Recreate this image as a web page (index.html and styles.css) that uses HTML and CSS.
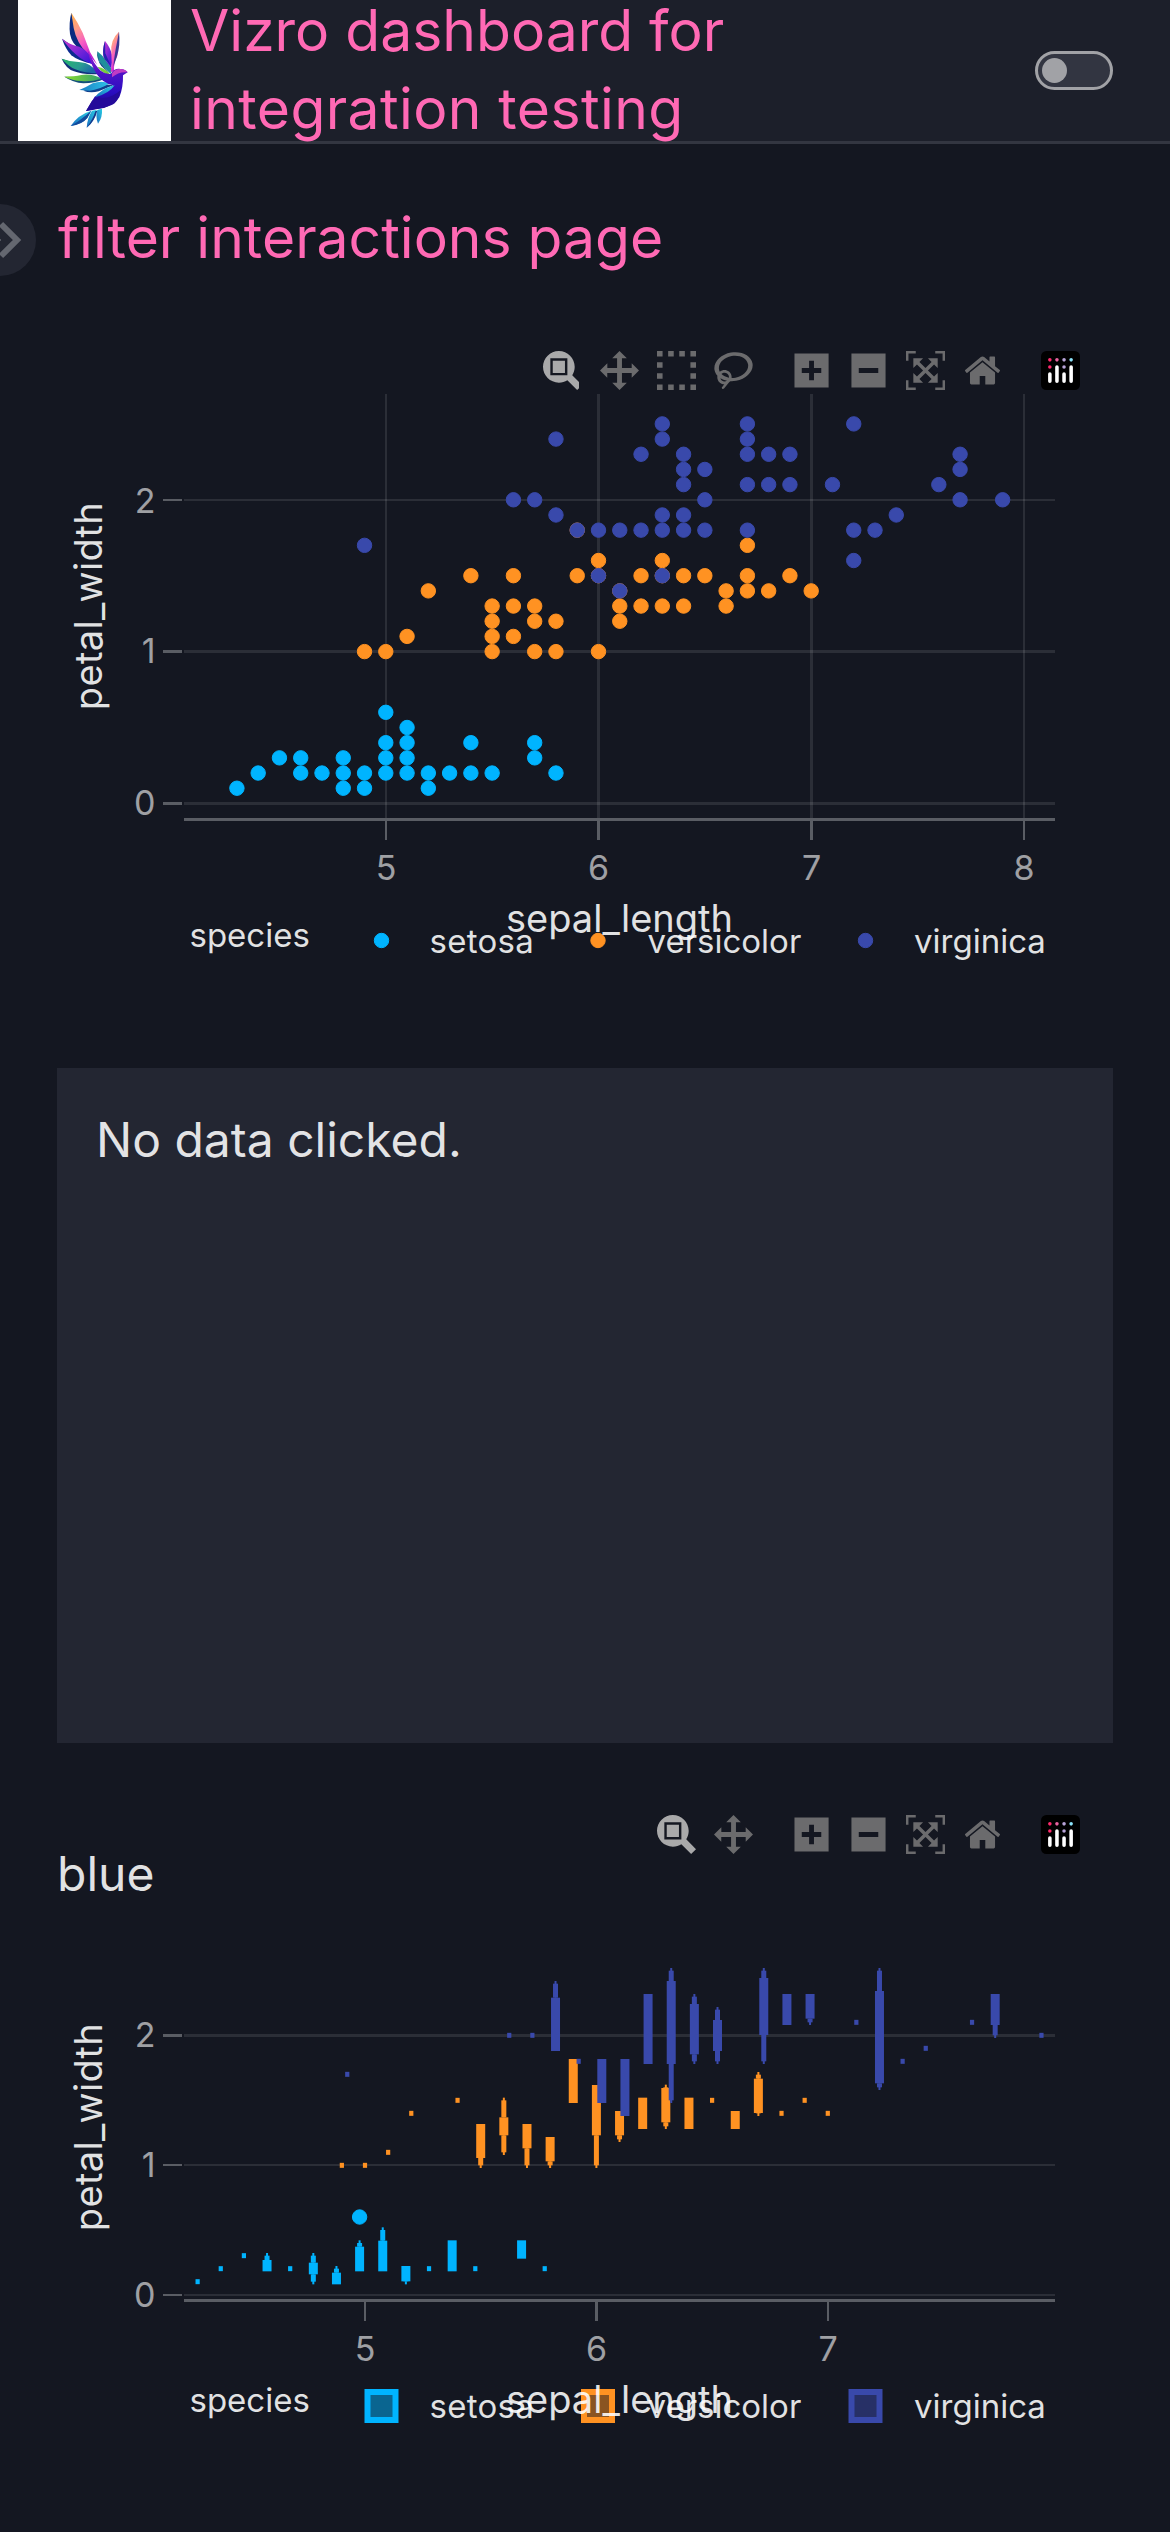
FILE: index.html
```html
<!DOCTYPE html>
<html lang="en">
<head>
<meta charset="utf-8">
<title>Vizro dashboard</title>
<link rel="stylesheet" href="styles.css">
</head>
<body>
<svg class="defs" width="0" height="0" aria-hidden="true">
  <symbol id="i-zoom" viewBox="0 0 1000 1000"><path transform="matrix(1 0 0 -1 0 850)" d="m1000-25l-250 251c40 63 63 138 63 218 0 224-182 406-407 406-224 0-406-182-406-406s183-406 407-406c80 0 155 22 218 62l250-250 125 125z m-812 250l0 438 437 0 0-438-437 0z m62 375l313 0 0-312-313 0 0 312z"/></symbol>
  <symbol id="i-pan" viewBox="0 0 1000 1000"><path transform="matrix(1 0 0 -1 0 850)" d="m1000 350l-187 188 0-125-250 0 0 250 125 0-188 187-187-187 125 0 0-250-250 0 0 125-188-188 186-187 0 125 252 0 0-250-125 0 187-188 188 188-125 0 0 250 250 0 0-126 187 188z"/></symbol>
  <symbol id="i-select" viewBox="0 0 1000 1000"><path transform="matrix(1 0 0 -1 0 850)" d="m0 850l0-143 143 0 0 143-143 0z m286 0l0-143 143 0 0 143-143 0z m285 0l0-143 143 0 0 143-143 0z m286 0l0-143 143 0 0 143-143 0z m-857-286l0-143 143 0 0 143-143 0z m857 0l0-143 143 0 0 143-143 0z m-857-285l0-143 143 0 0 143-143 0z m857 0l0-143 143 0 0 143-143 0z m-857-286l0-143 143 0 0 143-143 0z m286 0l0-143 143 0 0 143-143 0z m285 0l0-143 143 0 0 143-143 0z m286 0l0-143 143 0 0 143-143 0z"/></symbol>
  <symbol id="i-lasso" viewBox="0 0 1031 1000"><path transform="matrix(1 0 0 -1 0 850)" d="m1018 538c-36 207-290 336-568 286-277-48-473-256-436-463 10-57 36-108 76-151-13-66 11-137 68-183 34-28 75-41 114-42l-55-70 0 0c-2-1-3-2-4-3-10-14-8-34 5-45 14-11 34-8 45 4 1 1 2 3 2 5l0 0 113 140c16 11 31 24 45 40 4 3 6 7 8 11 48-3 100 0 151 9 278 48 473 255 436 462z m-624-379c-80 14-149 48-197 96 42 42 109 47 156 9 33-26 47-66 41-105z m-187-74c-19 16-33 37-39 60 50-32 109-55 174-68-42-25-95-24-135 8z m360 75c-34-7-69-9-102-8 8 62-16 128-68 170-73 59-175 54-244-5-9 20-16 40-20 61-28 159 121 317 333 354s407-60 434-217c28-159-121-318-333-355z"/></symbol>
  <symbol id="i-plus" viewBox="0 0 875 1000"><path transform="matrix(1 0 0 -1 0 850)" d="m1 787l0-875 875 0 0 875-875 0z m687-500l-187 0 0-187-125 0 0 187-188 0 0 125 188 0 0 187 125 0 0-187 187 0 0-125z"/></symbol>
  <symbol id="i-minus" viewBox="0 0 875 1000"><path transform="matrix(1 0 0 -1 0 850)" d="m0 788l0-876 875 0 0 876-875 0z m688-500l-500 0 0 125 500 0 0-125z"/></symbol>
  <symbol id="i-auto" viewBox="0 0 1000 1000"><path transform="matrix(1 0 0 -1 0 850)" d="m250 850l-187 0-63 0 0-62 0-188 63 0 0 188 187 0 0 62z m688 0l-188 0 0-62 188 0 0-188 62 0 0 188 0 62-62 0z m-875-938l0 188-63 0 0-188 0-62 63 0 187 0 0 62-187 0z m875 188l0-188-188 0 0-62 188 0 62 0 0 62 0 188-62 0z m-125 188l-1 0-93-94-156 156 156 156 92-93 2 0 0 250-250 0 0-2 93-92-156-156-156 156 94 92 0 2-250 0 0-250 0 0 93 93 157-156-157-156-93 94 0 0 0-250 250 0 0 0-94 93 156 157 156-157-93-93 0 0 250 0 0 250z"/></symbol>
  <symbol id="i-home" viewBox="0 0 928.6 1000"><path transform="matrix(1 0 0 -1 0 850)" d="m786 296v-267q0-15-11-26t-25-10h-214v214h-143v-214h-214q-15 0-25 10t-11 26v267q0 1 0 2t0 2l321 264 321-264q1-1 1-4z m124 39l-34-41q-5-5-12-6h-2q-7 0-12 3l-386 322-386-322q-7-4-13-4-7 2-12 7l-35 41q-4 5-3 13t6 12l401 334q18 15 42 15t43-15l136-114v109q0 8 5 13t13 5h107q8 0 13-5t5-13v-227l122-102q5-5 6-12t-4-13z"/></symbol>
  <symbol id="i-plotly" viewBox="0 0 132 132">
    <rect width="132" height="132" rx="18" fill="#000"/>
    <circle cx="102" cy="30" r="6" fill="#8ce4fb"/><circle cx="78" cy="30" r="6" fill="#b8a4d8"/><circle cx="78" cy="54" r="6" fill="#b8a4d8"/><circle cx="54" cy="30" r="6" fill="#e763a0"/><circle cx="30" cy="30" r="6" fill="#ff2a6d"/><circle cx="30" cy="54" r="6" fill="#ff2a6d"/>
    <path fill="#fff" d="M30,72a6,6,0,0,0-6,6v24a6,6,0,0,0,12,0V78A6,6,0,0,0,30,72ZM78,72a6,6,0,0,0-6,6v24a6,6,0,0,0,12,0V78A6,6,0,0,0,78,72ZM54,48a6,6,0,0,0-6,6v48a6,6,0,0,0,12,0V54A6,6,0,0,0,54,48ZM102,48a6,6,0,0,0-6,6v48a6,6,0,0,0,12,0V54A6,6,0,0,0,102,48Z"/>
  </symbol>
</svg>

<header class="header">
  <svg class="logo" viewBox="54 0 459 423" role="img" aria-label="Logo">
    <defs>
      <linearGradient id="g1" x1="0" y1="0" x2="0.4" y2="1"><stop offset="0" stop-color="#ffb347"/><stop offset=".35" stop-color="#ff9a8a"/><stop offset=".65" stop-color="#f65bc4"/><stop offset="1" stop-color="#c21fd0"/></linearGradient>
      <linearGradient id="g2" x1="0" y1="0" x2="1" y2="1"><stop offset="0" stop-color="#d83ccb"/><stop offset=".5" stop-color="#7a25d8"/><stop offset="1" stop-color="#2a12d8"/></linearGradient>
      <linearGradient id="g3" x1="0" y1="0" x2="1" y2=".4"><stop offset="0" stop-color="#25b868"/><stop offset=".6" stop-color="#2a9c92"/><stop offset="1" stop-color="#1a66a8"/></linearGradient>
      <linearGradient id="g4" x1="0" y1="0" x2="1" y2="0"><stop offset="0" stop-color="#8fe02c"/><stop offset="1" stop-color="#2f9e70"/></linearGradient>
      <linearGradient id="g5" x1="0" y1="0" x2="1" y2="0"><stop offset="0" stop-color="#1a7fc4"/><stop offset="1" stop-color="#2fc4e8"/></linearGradient>
      <linearGradient id="g6" x1="0" y1="0" x2="0" y2="1"><stop offset="0" stop-color="#9a1fd0"/><stop offset=".35" stop-color="#5214c8"/><stop offset=".7" stop-color="#2a0cc0"/><stop offset="1" stop-color="#1b0e78"/></linearGradient>
      <linearGradient id="g7" x1="1" y1="0" x2="0" y2="1"><stop offset="0" stop-color="#2ad0e4"/><stop offset="1" stop-color="#1a6cc0"/></linearGradient>
    </defs>
    <rect x="54" width="459" height="423" fill="#fff"/>
    <path fill="#0b2a80" d="M214 38Q206 70 210 102Q216 134 242 148L272 180L262 148Q236 120 225 82Z"/>
    <path fill="url(#g1)" d="M214 38Q234 68 248 98L270 156L292 194L262 160Q230 130 221 84Z"/>
    <path fill="#0b2a90" d="M186 116Q196 146 214 166Q236 184 280 192L264 170Z"/>
    <path fill="url(#g2)" d="M186 116Q208 134 238 140Q262 150 278 180L284 194Q252 186 226 162Q208 146 186 116Z"/>
    <path fill="#12307c" d="M185 176Q198 206 222 214Q254 226 298 222L270 206Z"/>
    <path fill="url(#g3)" d="M185 176Q212 186 242 187Q270 188 296 220Q252 220 226 208Q206 200 185 176Z"/>
    <path fill="#14507c" d="M193 230Q220 248 250 250Q284 250 312 238L290 232Z"/>
    <path fill="url(#g4)" d="M193 230Q224 230 244 225Q276 220 304 236Q272 246 244 243Q218 242 193 230Z"/>
    <path fill="#11408c" d="M250 272Q270 280 296 274L340 256L310 252Z"/>
    <path fill="url(#g5)" d="M238 270Q262 260 278 250Q304 240 330 250Q296 270 270 272Z"/>
    <path fill="#1e8f9c" d="M292 154Q290 176 302 192L332 222L336 210Q318 174 292 154Z"/>
    <path fill="#0d4a86" d="M292 154L297 184L330 222L304 198Q290 180 292 154Z"/>
    <path fill="#77cf3c" d="M292 200Q318 204 330 224L318 222Q300 212 292 200Z"/>
    <path fill="url(#g2)" d="M315 123Q306 150 310 170L334 206L338 170Q330 140 315 123Z"/>
    <path fill="#2323b0" d="M315 123L316 160L332 196L314 178Q304 156 315 123Z"/>
    <path fill="url(#g1)" d="M357 95Q330 120 334 158Q337 190 332 216L342 214Q340 190 352 168Q358 130 357 95Z"/>
    <path fill="#3a3690" d="M357 95Q362 136 350 172L340 200Q344 160 350 132Z"/>
    <path fill="url(#g6)" d="M262 148Q280 192 302 212Q318 224 332 222Q342 204 362 207Q376 208 383 217L369 226Q370 262 358 292Q344 312 312 324Q288 326 258 333L284 290L340 256Q308 250 290 222Q272 196 262 148Z"/>
    <path fill="#c03cc4" d="M336 220Q344 206 362 207Q376 208 383 217Q356 214 336 232Z"/>
    <path fill="#240a9a" d="M294 292Q330 300 362 270Q358 296 344 310Q324 324 258 333L276 302Z"/>
    <path fill="url(#g7)" d="M286 292Q300 268 344 256Q328 280 286 292Z"/>
    <path fill="url(#g7)" d="M274 332Q234 344 212 378Q246 372 262 354Z"/>
    <path fill="#134a9c" d="M274 332L262 354Q246 374 212 378Q240 362 274 332Z"/>
    <path fill="url(#g7)" d="M276 332Q262 354 260 383Q284 366 290 330Z"/>
    <path fill="#16388c" d="M286 334Q280 356 260 383Q284 364 292 332Z"/>
    <path fill="url(#g7)" d="M292 330Q286 352 294 371Q308 352 306 326Z"/>
  </svg>
  <h1 class="title">Vizro dashboard for <span class="title-second">integration testing</span></h1>
  <span class="switch"><span class="knob"></span></span>
</header>

<main class="page">
  <div class="page-head">
    <svg class="collapse" viewBox="0 0 36 72"><circle cx="0" cy="36" r="36" fill="#232632"/><path d="M1 20L17 36L1 52" fill="none" stroke="#646770" stroke-width="6"/><circle cx="0" cy="36" r="1" fill="#646770"/></svg>
    <h2 class="page-title">filter interactions page</h2>
  </div>

  <section class="figure figure-scatter">
    <div class="modebar">
      <div class="group"><svg class="on"><use href="#i-zoom"/></svg><svg><use href="#i-pan"/></svg><svg><use href="#i-select"/></svg><svg><use href="#i-lasso"/></svg></div>
      <div class="group"><svg><use href="#i-plus"/></svg><svg><use href="#i-minus"/></svg><svg><use href="#i-auto"/></svg><svg><use href="#i-home"/></svg></div>
      <div class="group"><svg><use href="#i-plotly"/></svg></div>
    </div>
    <svg class="plot" viewBox="57 390 1056 630" width="1056" height="630">
      <g class="grid"><rect x="385" y="394" width="2" height="424"/><rect x="597" y="394" width="3" height="424"/><rect x="810" y="394" width="3" height="424"/><rect x="1023" y="394" width="2" height="424"/><rect x="184" y="499" width="871" height="2"/><rect x="184" y="650" width="871" height="3"/><rect x="184" y="802" width="871" height="3"/></g>
      <g class="axis"><rect x="184" y="818" width="871" height="3"/><rect x="385" y="821" width="2" height="19"/><rect x="597" y="821" width="3" height="19"/><rect x="810" y="821" width="3" height="19"/><rect x="1023" y="821" width="2" height="19"/><rect x="163" y="499" width="19" height="2"/><rect x="163" y="650" width="19" height="3"/><rect x="163" y="802" width="19" height="3"/></g>
      <g id="scatter"></g>
      <g class="tick end"><text x="155.5" y="512.5">2</text><text x="155.5" y="663">1</text><text x="155.5" y="815">0</text></g>
      <g class="tick mid"><text x="386" y="880">5</text><text x="598.5" y="880">6</text><text x="811.5" y="880">7</text><text x="1024" y="880">8</text></g>
      <g class="legend"><text x="189.5" y="946.5">species</text><text class="wide" x="429.5" y="953">setosa</text><text x="647.5" y="953">versicolor</text><text x="914" y="953">virginica</text></g>
      <circle class="setosa" cx="381.5" cy="940.5" r="7.2"/><circle class="versicolor" cx="598" cy="940.5" r="7.2"/><circle class="virginica" cx="865.5" cy="940.5" r="7.2"/>
      <text class="label" x="619.5" y="932">sepal_length</text>
      <text class="label wide" transform="translate(101.5 606) rotate(-90)">petal_width</text>
    </svg>
  </section>

  <section class="card"><p>No data clicked.</p></section>

  <section class="figure figure-box">
    <div class="modebar">
      <div class="group"><svg class="on"><use href="#i-zoom"/></svg><svg><use href="#i-pan"/></svg></div>
      <div class="group"><svg><use href="#i-plus"/></svg><svg><use href="#i-minus"/></svg><svg><use href="#i-auto"/></svg><svg><use href="#i-home"/></svg></div>
      <div class="group"><svg><use href="#i-plotly"/></svg></div>
    </div>
    <h3 class="figure-title">blue</h3>
    <svg class="plot" viewBox="57 1920 1056 560" width="1056" height="560">
      <g class="grid"><rect x="184" y="2034" width="871" height="3"/><rect x="184" y="2164" width="871" height="2"/><rect x="184" y="2294" width="871" height="2"/></g>
      <g class="axis"><rect x="184" y="2299" width="871" height="3"/><rect x="364" y="2302" width="2" height="19"/><rect x="595" y="2302" width="3" height="19"/><rect x="827" y="2302" width="2" height="19"/><rect x="163" y="2034" width="19" height="3"/><rect x="163" y="2164" width="19" height="2"/><rect x="163" y="2294" width="19" height="2"/></g>
      <g id="boxes"></g>
      <g class="tick end"><text x="155.5" y="2047">2</text><text x="155.5" y="2177">1</text><text x="155.5" y="2307">0</text></g>
      <g class="tick mid"><text x="365" y="2361">5</text><text x="596.5" y="2361">6</text><text x="828" y="2361">7</text></g>
      <g class="legend"><text x="189.5" y="2411.5">species</text><text class="wide" x="429.5" y="2418">setosa</text><text x="647.5" y="2418">versicolor</text><text x="914" y="2418">virginica</text></g>
      <g class="keys"><rect class="setosa" x="367.5" y="2392" width="28" height="28"/><rect class="versicolor" x="584" y="2392" width="28" height="28"/><rect class="virginica" x="851.5" y="2392" width="28" height="28"/></g>
      <text class="label" x="619.5" y="2413">sepal_length</text>
      <text class="label wide" transform="translate(101.5 2127) rotate(-90)">petal_width</text>
    </svg>
  </section>
</main>
<script src="script.js"></script>
</body>
</html>
```
FILE: styles.css
```css
* { box-sizing: border-box; margin: 0; }
body { background: #141721; font-family: Inter, "Liberation Sans", sans-serif; color: rgba(255,255,255,.88); height: 2532px; overflow: hidden; }
.defs { display: block; position: absolute; }
h1, h2, h3 { font-weight: 400; }

.header { display: flex; align-items: center; height: 144px; padding: 0 57px 0 18px; background: #1c1f2a; border-bottom: 3px solid #333641; }
.logo { flex: none; width: 153px; height: 141px; margin-right: 19px; }
.title { width: 640px; margin-bottom: 2px; font-size: 57px; line-height: 78px; color: #ff69b4; }
.title-second { letter-spacing: .4px; }
.switch { display: flex; align-items: center; width: 78px; height: 39px; margin-left: auto; padding-left: 4px; border: 3px solid #a1a2a6; border-radius: 20px; background: #323541; }
.knob { width: 25px; height: 25px; border-radius: 50%; background: #a1a2a6; }

.page { display: flex; flex-direction: column; }
.page-head { display: flex; align-items: center; height: 72px; margin-top: 60px; gap: 22px; }
.collapse { width: 36px; height: 72px; }
.page-title { padding-bottom: 5px; font-size: 57px; line-height: 72px; color: #ff69b4; }

.figure { display: flex; flex-direction: column; padding: 0 57px; }
.figure-scatter { height: 669px; margin-top: 75px; }
.figure-box { margin-top: 72px; }
.modebar { display: flex; justify-content: flex-end; gap: 39px; height: 39px; padding-right: 33px; fill: #6b6b6d; }
.modebar .on { fill: #a9a9aa; }
.figure-scatter .on { clip-path: inset(0 3px 0 0); }
.group { display: flex; gap: 18px; }
.group svg { width: 39px; height: 39px; }
.plot { display: block; flex: none; }

.card { width: 1056px; height: 675px; margin: 48px 57px 0; padding: 36px 39px; background: #232632; }
.card p { font-size: 48px; line-height: 72px; }
.figure-title { height: 66px; font-size: 48px; line-height: 40px; }

.grid { fill: #fff; fill-opacity: .1; shape-rendering: crispEdges; }
.axis { fill: #fff; fill-opacity: .3; shape-rendering: crispEdges; }
.tick { font-size: 34px; fill: rgba(255,255,255,.6); }
.end { text-anchor: end; }
.mid { text-anchor: middle; }
.legend { font-size: 33px; fill: rgba(255,255,255,.88); }
.label { font-size: 38px; fill: rgba(255,255,255,.88); text-anchor: middle; }
.wide { letter-spacing: .3px; }
.setosa { fill: #00b4ff; stroke: #00b4ff; }
.versicolor { fill: #ff9222; stroke: #ff9222; }
.virginica { fill: #3949ab; stroke: #3949ab; }
circle, #boxes rect { stroke: none; }
.keys rect { stroke-width: 6; fill-opacity: .5; }
```
FILE: script.js
```js
const NS = "http://www.w3.org/2000/svg";
function add(parent, tag, attrs) {
  const el = document.createElementNS(NS, tag);
  for (const k in attrs) el.setAttribute(k, attrs[k]);
  parent.appendChild(el);
}

// petal_width -> list of sepal_length
const scatter = {
  setosa: {
    0.1: [4.3, 4.8, 4.9, 5.2], 0.2: [4.4, 4.6, 4.7, 4.8, 4.9, 5, 5.1, 5.2, 5.3, 5.4, 5.5, 5.8],
    0.3: [4.5, 4.6, 4.8, 5, 5.1, 5.7], 0.4: [5, 5.1, 5.4, 5.7], 0.5: [5.1], 0.6: [5]
  },
  versicolor: {
    1.0: [4.9, 5, 5.5, 5.7, 5.8, 6], 1.1: [5.1, 5.5, 5.6], 1.2: [5.5, 5.7, 5.8, 6.1],
    1.3: [5.5, 5.6, 5.7, 6.1, 6.2, 6.3, 6.4, 6.6], 1.4: [5.2, 6.1, 6.6, 6.7, 6.8, 7],
    1.5: [5.4, 5.6, 5.9, 6, 6.2, 6.3, 6.4, 6.5, 6.7, 6.9], 1.6: [6, 6.3], 1.7: [6.7], 1.8: [5.9]
  },
  virginica: {
    1.4: [6.1], 1.5: [6, 6.3], 1.6: [7.2], 1.7: [4.9],
    1.8: [5.9, 6, 6.1, 6.2, 6.3, 6.4, 6.5, 6.7, 7.2, 7.3], 1.9: [5.8, 6.3, 6.4, 7.4],
    2.0: [5.6, 5.7, 6.5, 7.7, 7.9], 2.1: [6.4, 6.7, 6.8, 6.9, 7.1, 7.6], 2.2: [6.4, 6.5, 7.7],
    2.3: [6.2, 6.4, 6.7, 6.8, 6.9, 7.7], 2.4: [5.8, 6.3, 6.7], 2.5: [6.3, 6.7, 7.2]
  }
};
const sg = document.getElementById("scatter");
for (const name in scatter)
  for (const y in scatter[name])
    for (const x of scatter[name][y])
      add(sg, "circle", { class: name, cx: 385.8 + 212.7 * (x - 5), cy: 803.4 - 151.8 * y, r: 7.2 });

// [sepal_length, centre] for a flat box, [sepal_length, top, bottom, whisker top, whisker bottom] otherwise;
// vertical values are thirds of a pixel from the plot's top edge
const boxes = {
  setosa: [[4.3, 1055], [4.4, 1016], [4.5, 977], [4.6, 990, 1024, 969], [4.7, 1016], [4.8, 998, 1033, 969, 1063],
    [4.9, 1028, 1063, 1008], [5, 950, 1024, 931], [5.1, 932, 1024, 892], [5.2, 1008, 1054, 0, 1063], [5.3, 1016],
    [5.4, 931, 1024], [5.5, 1016], [5.7, 931, 986], [5.8, 1016]],
  versicolor: [[4.9, 706], [5, 706], [5.1, 667], [5.2, 550], [5.4, 511], [5.5, 582, 684, 0, 714], [5.6, 562, 616, 503, 675],
    [5.7, 582, 655, 0, 714], [5.8, 621, 694, 0, 714], [5.9, 387, 519], [6, 465, 616, 0, 714], [6.1, 543, 616, 0, 636],
    [6.2, 503, 597], [6.3, 474, 577, 464, 597], [6.4, 503, 597], [6.5, 511], [6.6, 543, 597], [6.7, 446, 549, 426, 558],
    [6.8, 550], [6.9, 511], [7, 550]],
  virginica: [[4.9, 433], [5.6, 316], [5.7, 316], [5.8, 203, 363, 153], [5.9, 394], [6, 387, 519], [6.1, 387, 558],
    [6.2, 192, 402], [6.3, 153, 402, 114, 519], [6.4, 222, 373, 192, 402], [6.5, 270, 363, 231, 402],
    [6.7, 144, 315, 114, 402], [6.8, 192, 285], [6.9, 192, 266, 0, 285], [7.1, 277], [7.2, 183, 460, 114, 480],
    [7.3, 394], [7.4, 355], [7.6, 277], [7.7, 192, 285, 0, 324], [7.9, 316]]
};
const offset = { setosa: -5.4, versicolor: 0, virginica: 5.4 };
const bg = document.getElementById("boxes");
for (const name in boxes)
  for (const [v, a, b, top, bottom] of boxes[name]) {
    const cx = 365 + 231.4 * (v - 5) + offset[name];
    const bar = (w, y0, y1) => add(bg, "rect", { class: name, x: cx - w / 2, y: 1930 + y0 / 3, width: w, height: (y1 - y0) / 3 });
    if (b === undefined) { bar(4.2, a - 7.5, a + 7.5); continue; }
    bar(9, a, b);
    if (top) { bar(5, Math.min(top + 8, a), a); bar(2, top, a); }
    if (bottom) { bar(5, b, Math.max(bottom - 8, b)); bar(2, b, bottom); }
  }
add(bg, "circle", { class: "setosa", cx: 359.6, cy: 2217, r: 7.2 });
```
